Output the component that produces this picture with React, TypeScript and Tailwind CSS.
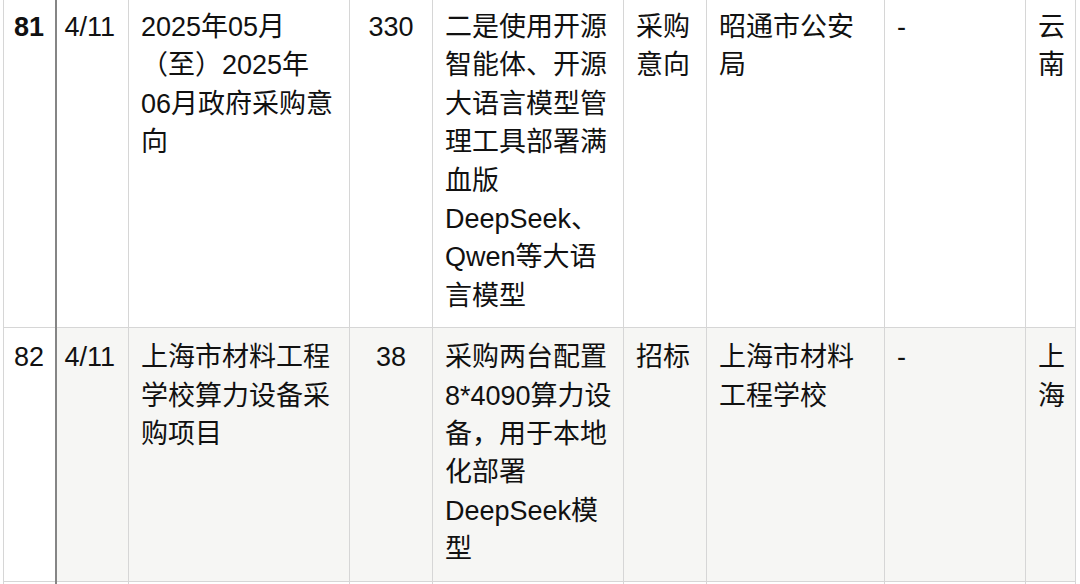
import React from 'react';

type Row = {
  no: string;
  date: string;
  title: string;
  amount: string;
  desc: string;
  kind: string;
  buyer: string;
  vendor: string;
  region: string;
  bold?: boolean;
  shaded?: boolean;
};

const rows: Row[] = [
  {
    no: '81',
    date: '4/11',
    title: '2025年05月（至）2025年06月政府采购意向',
    amount: '330',
    desc: '二是使用开源智能体、开源大语言模型管理工具部署满血版DeepSeek、Qwen等大语言模型',
    kind: '采购意向',
    buyer: '昭通市公安局',
    vendor: '-',
    region: '云南',
    bold: true,
  },
  {
    no: '82',
    date: '4/11',
    title: '上海市材料工程学校算力设备采购项目',
    amount: '38',
    desc: '采购两台配置8*4090算力设备，用于本地化部署DeepSeek模型',
    kind: '招标',
    buyer: '上海市材料工程学校',
    vendor: '-',
    region: '上海',
    shaded: true,
  },
];

const cell = 'border border-[#d6d6d6] align-top pt-[10px] pb-[12px]';

export default function App() {
  return (
    <div
      className="w-[1080px] h-[584px] overflow-hidden bg-white text-[#111] text-[27px] leading-[38.4px]"
      style={{ fontFamily: '"Liberation Sans", "Noto Sans CJK SC", sans-serif' }}
    >
      <table className="ml-[3px] -mt-[3px] table-fixed border-collapse w-[1072px]">
        <colgroup>
          <col className="w-[52px]" />
          <col className="w-[73px]" />
          <col className="w-[221px]" />
          <col className="w-[83px]" />
          <col className="w-[191px]" />
          <col className="w-[83px]" />
          <col className="w-[178px]" />
          <col className="w-[141px]" />
          <col className="w-[50px]" />
        </colgroup>
        <tbody>
          {rows.map(r => (
            <tr key={r.no} className={r.shaded ? 'bg-[#f6f6f4]' : 'bg-white'}>
              <td className={`${cell} pl-[10px] pr-[2px] bg-white border-r-2 border-r-[#858585] ${r.bold ? 'font-bold' : ''}`}>{r.no}</td>
              <td className={`${cell} pl-[8px] pr-[2px]`}>{r.date}</td>
              <td className={`${cell} pl-[12px] pr-[12px]`}>{r.title}</td>
              <td className={`${cell} text-center px-[4px]`}>{r.amount}</td>
              <td className={`${cell} pl-[12px] pr-[10px]`}>{r.desc}</td>
              <td className={`${cell} pl-[12px] pr-[10px]`}>{r.kind}</td>
              <td className={`${cell} pl-[12px] pr-[12px]`}>{r.buyer}</td>
              <td className={`${cell} pl-[12px] pr-[12px]`}>{r.vendor}</td>
              <td className={`${cell} pl-[12px] pr-[4px]`}>{r.region}</td>
            </tr>
          ))}
          <tr className="bg-white h-[40px]">
            <td className="border border-[#d6d6d6] border-r-2 border-r-[#858585]" />
            <td className="border border-[#d6d6d6]" />
            <td className="border border-[#d6d6d6]" />
            <td className="border border-[#d6d6d6]" />
            <td className="border border-[#d6d6d6]" />
            <td className="border border-[#d6d6d6]" />
            <td className="border border-[#d6d6d6]" />
            <td className="border border-[#d6d6d6]" />
            <td className="border border-[#d6d6d6]" />
          </tr>
        </tbody>
      </table>
    </div>
  );
}
